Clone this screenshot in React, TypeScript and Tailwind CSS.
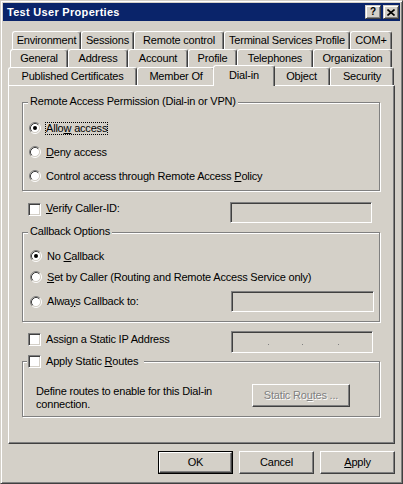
import React from 'react';

const raised =
  'border border-t-white border-l-white border-r-[#404040] border-b-[#404040] shadow-[inset_-1px_-1px_0_#808080]';
const sunken =
  'border border-t-[#808080] border-l-[#808080] border-r-white border-b-white shadow-[inset_1px_1px_0_#404040,inset_-1px_-1px_0_#d4d0c8]';
const etched = 'border border-[#808080] shadow-[inset_1px_1px_0_#ffffff,1px_1px_0_#ffffff]';

type TabDef = { label: string; w: string; active?: boolean };

const ROW1: TabDef[] = [
  { label: 'Environment', w: 'w-[69px]' },
  { label: 'Sessions', w: 'w-[53px]' },
  { label: 'Remote control', w: 'w-[90px]' },
  { label: 'Terminal Services Profile', w: 'w-[126px]' },
  { label: 'COM+', w: 'w-[42px]' },
];
const ROW2: TabDef[] = [
  { label: 'General', w: 'w-[58px]' },
  { label: 'Address', w: 'w-[60px]' },
  { label: 'Account', w: 'w-[60px]' },
  { label: 'Profile', w: 'w-[49px]' },
  { label: 'Telephones', w: 'w-[76px]' },
  { label: 'Organization', w: 'w-[79px]' },
];
const ROW3: TabDef[] = [
  { label: 'Published Certificates', w: 'w-[129px]' },
  { label: 'Member Of', w: 'w-[78px]' },
  { label: 'Dial-in', w: 'w-[62px]', active: true },
  { label: 'Object', w: 'w-[57px]' },
  { label: 'Security', w: 'w-[64px]' },
];

const Tab = ({ label, w, active }: TabDef) => (
  <div
    className={`${w} ${
      active ? 'relative z-10 -mx-[2px] -mt-[2px] h-[21px] pt-[3px]' : 'h-[18px] pt-[2px]'
    } shrink-0 flex justify-center rounded-t-[3px] bg-[#d4d0c8] border-t border-l border-white border-r border-r-[#404040] shadow-[inset_-1px_0_0_#808080] whitespace-nowrap`}
  >
    {label}
  </div>
);

const Radio = ({ checked }: { checked?: boolean }) => (
  <svg width="12" height="12" viewBox="0 0 12 12" className="shrink-0">
    <circle cx="6" cy="6" r="4.5" fill="#ffffff" />
    <path d="M2.11 9.89A5.5 5.5 0 0 1 9.89 2.11" fill="none" stroke="#808080" />
    <path d="M9.89 2.11A5.5 5.5 0 0 1 2.11 9.89" fill="none" stroke="#ffffff" />
    <path d="M2.82 9.18A4.5 4.5 0 0 1 9.18 2.82" fill="none" stroke="#404040" />
    <path d="M9.18 2.82A4.5 4.5 0 0 1 2.82 9.18" fill="none" stroke="#d4d0c8" />
    {checked && <circle cx="6" cy="6" r="2" fill="#000000" />}
  </svg>
);

const Check = () => <div className={`w-[13px] h-[13px] shrink-0 bg-white ${sunken}`} />;

const Field = ({ w, children }: { w: string; children?: React.ReactNode }) => (
  <div className={`${w} h-[21px] bg-[#d4d0c8] ${sunken}`}>{children}</div>
);

const Legend = ({ children }: { children: React.ReactNode }) => (
  <div className="absolute -top-[8px] left-[5px] px-[2px] bg-[#d4d0c8] leading-[13px] whitespace-nowrap">
    {children}
  </div>
);

export default function App() {
  return (
    <div
      className="w-[403px] h-[484px] bg-[#d4d0c8] p-[2px] border border-t-[#d4d0c8] border-l-[#d4d0c8] border-r-[#404040] border-b-[#404040] shadow-[inset_1px_1px_0_#ffffff,inset_-1px_-1px_0_#808080] text-black text-[11px] leading-[13px] tracking-[-0.2px] overflow-hidden"
      style={{ fontFamily: '"Liberation Sans", Arial, sans-serif' }}
    >
      {/* caption */}
      <div className="h-[18px] bg-[#0a246a] flex items-center justify-between pl-[4px] pr-[1px]">
        <span className="text-white font-bold text-[11px] tracking-[0.3px]">Test User Properties</span>
        <div className="flex gap-[2px]">
          <div className="w-[16px] h-[14px] bg-[#d4d0c8] border border-t-[#d4d0c8] border-l-[#d4d0c8] border-r-[#404040] border-b-[#404040] shadow-[inset_1px_1px_0_#ffffff,inset_-1px_-1px_0_#808080] flex items-center justify-center font-bold text-[10px] leading-none">
            ?
          </div>
          <div className="w-[16px] h-[14px] bg-[#d4d0c8] border border-t-[#d4d0c8] border-l-[#d4d0c8] border-r-[#404040] border-b-[#404040] shadow-[inset_1px_1px_0_#ffffff,inset_-1px_-1px_0_#808080] flex items-center justify-center">
            <svg width="8" height="7" viewBox="0 0 8 7">
              <path d="M0.5 0.5L7.5 6.5M7.5 0.5L0.5 6.5" stroke="#000" strokeWidth="1.6" />
            </svg>
          </div>
        </div>
      </div>

      <div className="px-[5px] mt-[10px] flex flex-col">
        {/* tabs */}
        <div className="flex h-[18px] pl-[4px]">
          {ROW1.map((t) => (
            <Tab key={t.label} {...t} />
          ))}
        </div>
        <div className="flex h-[18px] pl-[2px]">
          {ROW2.map((t) => (
            <Tab key={t.label} {...t} />
          ))}
        </div>
        <div className="flex h-[18px] items-start">
          {ROW3.map((t) => (
            <Tab key={t.label} {...t} />
          ))}
        </div>

        {/* page */}
        <div
          className="relative w-[387px] h-[359px] flex flex-col pl-[13px] pt-[16px] border border-t-white border-l-white border-r-[#404040] border-b-[#404040] shadow-[inset_-1px_-1px_0_#808080]"
        >
          <div className={`relative w-[358px] h-[89px] shrink-0 ${etched} pt-[13px] pl-[6px] flex flex-col`}>
            <Legend>Remote Access Permission (Dial-in or VPN)</Legend>
            <div className="h-[24px] flex items-center">
              <Radio checked />
              <span className="ml-[4px] border border-dotted border-black leading-[11px]">
                Allo<u>w</u> access
              </span>
            </div>
            <div className="h-[24px] flex items-center">
              <Radio />
              <span className="ml-[5px]">
                <u>D</u>eny access
              </span>
            </div>
            <div className="h-[24px] flex items-center">
              <Radio />
              <span className="ml-[5px]">
                Control access through Remote Access <u>P</u>olicy
              </span>
            </div>
          </div>

          <div className="mt-[11px] h-[21px] shrink-0 grid grid-cols-[208px_142px]">
            <div className="flex items-start pl-[6px]">
              <div className="mt-[1px]">
                <Check />
              </div>
              <span className="ml-[5px]">
                <u>V</u>erify Caller-ID:
              </span>
            </div>
            <Field w="w-[142px]" />
          </div>

          <div className={`relative mt-[9px] w-[358px] h-[90px] shrink-0 ${etched} pt-[13px] pl-[7px] flex flex-col`}>
            <Legend>Callback Options</Legend>
            <div className="h-[20px] flex items-center">
              <Radio checked />
              <span className="ml-[5px]">
                No <u>C</u>allback
              </span>
            </div>
            <div className="h-[22px] flex items-center">
              <Radio />
              <span className="ml-[5px]">
                <u>S</u>et by Caller (Routing and Remote Access Service only)
              </span>
            </div>
            <div className="mt-[3px] h-[21px] grid grid-cols-[201px_143px] items-center">
              <div className="flex items-center">
                <Radio />
                <span className="ml-[5px]">
                  Alwa<u>y</u>s Callback to:
                </span>
              </div>
              <Field w="w-[143px]" />
            </div>
          </div>

          <div className="mt-[9px] h-[22px] shrink-0 grid grid-cols-[209px_142px]">
            <div className="flex items-start pl-[6px]">
              <div className="mt-[2px]">
                <Check />
              </div>
              <span className="ml-[5px] mt-[2px]">Assign a Static IP Address</span>
            </div>
            <div className={`w-[142px] h-[22px] bg-[#d4d0c8] ${sunken} flex items-start pt-[12px]`}>
              <div className="ml-[36px] w-[1px] h-[1px] bg-[#808080]" />
              <div className="ml-[33px] w-[1px] h-[1px] bg-[#808080]" />
              <div className="ml-[35px] w-[1px] h-[1px] bg-[#808080]" />
            </div>
          </div>

          <div className={`relative mt-[8px] w-[358px] h-[56px] shrink-0 ${etched} pt-[22px] pl-[13px] flex items-start`}>
            <div className="absolute -top-[7px] left-[4px] px-[1px] pr-[6px] bg-[#d4d0c8] flex items-center leading-[13px]">
              <Check />
              <span className="ml-[5px]">
                Apply Static <u>R</u>outes
              </span>
            </div>
            <div className="w-[216px] mt-[1px]">
              Define routes to enable for this Dial-in
              <br />
              connection.
            </div>
            <div className={`w-[98px] h-[23px] bg-[#d4d0c8] ${raised} flex items-center justify-center text-[#808080] [text-shadow:1px_1px_0_#ffffff]`}>
              Static Ro<u>u</u>tes ...
            </div>
          </div>
        </div>

        {/* buttons */}
        <div className="mt-[7px] flex justify-end gap-[6px]">
          <div className="w-[75px] h-[23px] border border-black">
            <div className={`w-full h-full ${raised} flex items-center justify-center`}>OK</div>
          </div>
          <div className={`w-[75px] h-[23px] ${raised} flex items-center justify-center`}>Cancel</div>
          <div className={`w-[75px] h-[23px] ${raised} flex items-center justify-center`}>
            <span>
              <u>A</u>pply
            </span>
          </div>
        </div>
      </div>
    </div>
  );
}
